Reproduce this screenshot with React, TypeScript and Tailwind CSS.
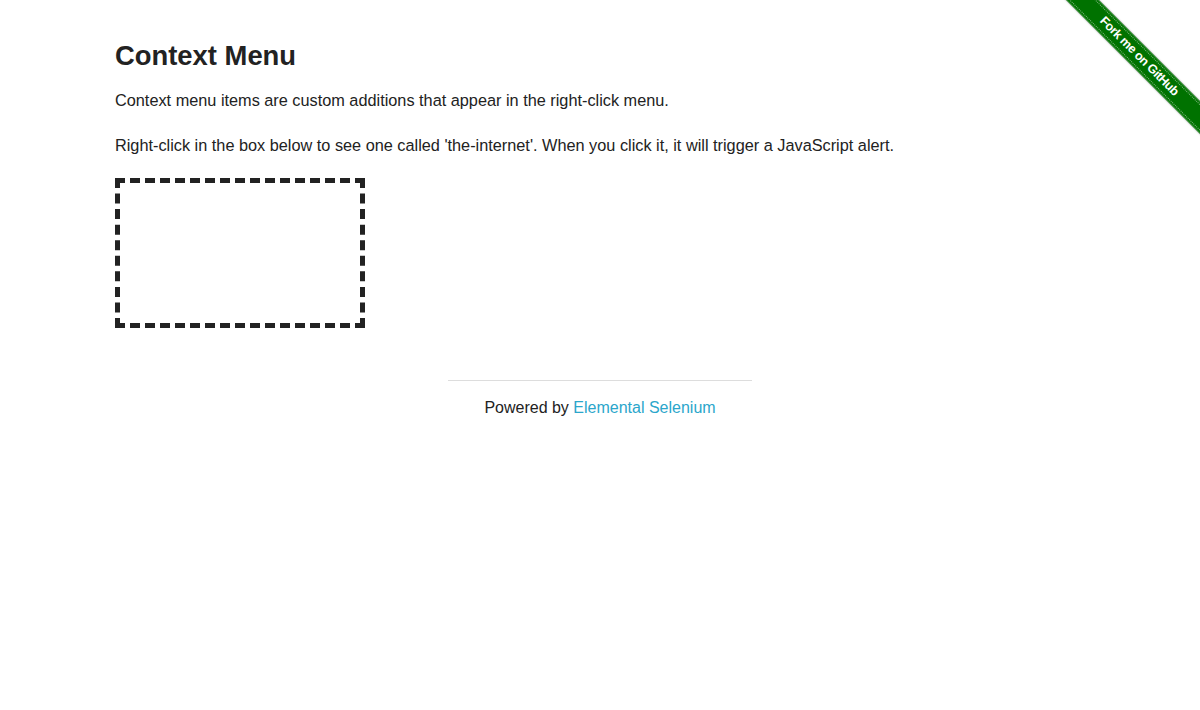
import React from 'react';

export default function App() {
    return (
        <div className="relative min-h-[710px] bg-white text-[#222] font-['Liberation_Sans',Arial,sans-serif]">
            {/* github ribbon */}
            <div className="absolute top-0 right-0 w-[149px] h-[149px] overflow-hidden">
                <div className="absolute top-[45px] right-[-44px] w-[210px] rotate-45 bg-[#007200] border-y border-[#2e8b2e] shadow-[0_0_2px_rgba(0,0,0,0.5)]">
                    <div className="border-y border-dotted border-white/50 my-[1px] py-[1px] text-center text-white text-[12.5px] font-bold leading-[15px] tracking-[-0.4px]">
                        Fork me on GitHub
                    </div>
                </div>
            </div>

            <div className="max-w-[1000px] mx-auto px-[15px] pt-[39px]">
                <h3 className="text-[27.4px] font-bold leading-[34px] mb-[15px]">Context Menu</h3>
                <p className="text-[16.3px] leading-[24px] mb-[21px]">
                    Context menu items are custom additions that appear in the right-click menu.
                </p>
                <p className="text-[16.3px] leading-[24px] mb-[21px]">
                    Right-click in the box below to see one called 'the-internet'. When you click it, it will trigger a JavaScript alert.
                </p>
                <div className="w-[250px] h-[150px] border-[5px] border-dashed border-[#222]"></div>
            </div>

            <div className="w-[304px] mx-auto mt-[52px] border-t border-[#ddd] pt-[15px] text-center text-[16px] leading-[24px]">
                Powered by <a href="#" className="text-[#2ba6cb]">Elemental Selenium</a>
            </div>
        </div>
    );
}
